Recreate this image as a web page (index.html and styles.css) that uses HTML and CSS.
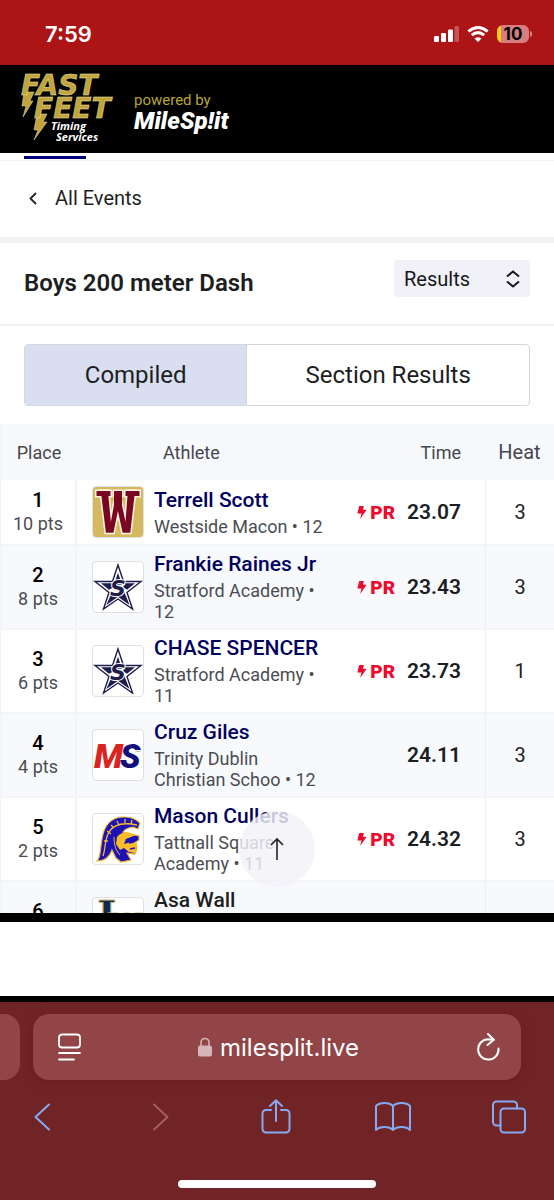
FILE: index.html
```
<!DOCTYPE html>
<html lang="en">
<head>
    <meta charset="UTF-8">
    <meta name="viewport" content="width=device-width, initial-scale=1.0">
    <title>Boys 200 meter Dash - MileSplit Live</title>
    <link rel="stylesheet" href="styles.css">
</head>
<body>
    <div class="status-bar">
        <span class="clock">7:59</span>
        <div class="status-icons">
            <svg width="25" height="16" viewBox="0 0 25 16" fill="#fff">
                <rect x="0" y="10" width="5" height="6" rx="1.3"/>
                <rect x="7" y="7" width="5" height="9" rx="1.3"/>
                <rect x="14" y="3.500" width="5" height="12.500" rx="1.3"/>
                <rect x="20.500" y="0" width="4.500" height="16" rx="1.3" opacity=".28"/>
            </svg>
            <svg width="22" height="16" viewBox="0 0 22 16" fill="none" stroke="#fff" stroke-width="3">
                <path d="M1.300 5.400Q11-2.600 20.700 5.400"/>
                <path d="M4.800 9.200Q11 4 17.200 9.200"/>
                <path d="M11 16 7.500 12.600Q11 9.800 14.500 12.600Z" fill="#fff" stroke="none"/>
            </svg>
            <div class="battery"><span>10</span></div>
        </div>
    </div>

    <header class="site-header">
        <svg class="timing-logo" width="96" height="72" viewBox="0 0 96 72">
            <g fill="#c1a43b" stroke="#efe3b0" stroke-width=".5">
                <path d="M4 19 14 19 10 28 13 28 3 44 6 33 2 33Z"/>
                <path d="M17 41 27 41 23 49 27 49 14 67 18 57 14 57Z"/>
                <text class="timing-name" x="1" y="22">FAST</text>
                <text class="timing-name" x="14" y="45">FEET</text>
            </g>
            <text class="timing-sub" x="31" y="57">Timing</text>
            <text class="timing-sub" x="36" y="68">Services</text>
        </svg>
        <div class="powered">
            <span>powered by</span>
            <strong>MileSp!it</strong>
        </div>
    </header>

    <main class="page">
        <div class="nav-strip"><i></i></div>

        <a class="back-link" href="#events">
            <svg width="18" height="18" viewBox="0 0 18 18" fill="none" stroke="#222" stroke-width="1.8"><path d="M12 4 6.500 9.500 12 15"/></svg>
            All Events
        </a>

        <div class="event-head">
            <h1>Boys 200 meter Dash</h1>
            <div class="select-wrap">
                <select aria-label="View">
                    <option>Results</option>
                    <option>Entries</option>
                </select>
                <svg width="16" height="18" viewBox="0 0 16 18" fill="none" stroke="#16181d" stroke-width="2"><path d="M2 6.500 8 1.500 14 6.500M2 11.500 8 16.500 14 11.500"/></svg>
            </div>
        </div>

        <div class="tabs">
            <button type="button" class="active">Compiled</button>
            <button type="button">Section Results</button>
        </div>

        <table class="results">
            <thead>
                <tr>
                    <th class="place">Place</th>
                    <th class="athlete">Athlete</th>
                    <th class="time">Time</th>
                    <th class="heat">Heat</th>
                </tr>
            </thead>
            <tbody>
                <tr>
                    <td class="place"><b>1</b><span>10 pts</span></td>
                    <td class="athlete">
                        <div class="runner">
                            <svg class="logo" viewBox="0 0 50 50">
                                <rect width="50" height="50" fill="#d5b95f"/>
                                <g fill="#7a0722" stroke="#fff5e4" stroke-width="3">
                                    <rect x="3.500" y="4" width="14" height="5"/>
                                    <rect x="21" y="4" width="8" height="5"/>
                                    <rect x="32.500" y="4" width="14" height="5"/>
                                    <text class="logo-w" x="25" y="46" text-anchor="middle">W</text>
                                </g>
                                <g fill="#7a0722">
                                    <rect x="3.500" y="4" width="14" height="5"/>
                                    <rect x="21" y="4" width="8" height="14"/>
                                    <rect x="32.500" y="4" width="14" height="5"/>
                                </g>
                            </svg>
                            <div class="info"><a href="#terrell-scott">Terrell Scott</a><p>Westside Macon • 12</p></div>
                        </div>
                    </td>
                    <td class="time"><div class="mark"><em><svg width="10" height="13" viewBox="0 0 10 14"><path d="M2 0H7L6 4H10L3 14 4.500 8H0Z" fill="#ee0a2e"/></svg>PR</em>23.07</div></td>
                    <td class="heat">3</td>
                </tr>
                <tr>
                    <td class="place"><b>2</b><span>8 pts</span></td>
                    <td class="athlete">
                        <div class="runner">
                            <svg class="logo" viewBox="0 0 50 50">
                                <g stroke="#1d1c4b" stroke-width="1.4">
                                    <path d="M25 3 30.500 19.500H48L34 30.500 39.500 47 25 37 10.500 47 16 30.500 2 19.500H19.500Z" fill="#fff"/>
                                    <path d="M25 13 28 22H22ZM10 22H18L20 25 16 27ZM40 22H32L31 25 34 27ZM19 32 15 41 25 34 35 41 31 31 25 32Z" fill="#1d1c4b"/>
                                </g>
                                <text class="logo-s" x="25" y="34" text-anchor="middle">S</text>
                            </svg>
                            <div class="info"><a href="#frankie-raines">Frankie Raines Jr</a><p>Stratford Academy • 12</p></div>
                        </div>
                    </td>
                    <td class="time"><div class="mark"><em><svg width="10" height="13" viewBox="0 0 10 14"><path d="M2 0H7L6 4H10L3 14 4.500 8H0Z" fill="#ee0a2e"/></svg>PR</em>23.43</div></td>
                    <td class="heat">3</td>
                </tr>
                <tr>
                    <td class="place"><b>3</b><span>6 pts</span></td>
                    <td class="athlete">
                        <div class="runner">
                            <svg class="logo" viewBox="0 0 50 50">
                                <g stroke="#1d1c4b" stroke-width="1.4">
                                    <path d="M25 3 30.500 19.500H48L34 30.500 39.500 47 25 37 10.500 47 16 30.500 2 19.500H19.500Z" fill="#fff"/>
                                    <path d="M25 13 28 22H22ZM10 22H18L20 25 16 27ZM40 22H32L31 25 34 27ZM19 32 15 41 25 34 35 41 31 31 25 32Z" fill="#1d1c4b"/>
                                </g>
                                <text class="logo-s" x="25" y="34" text-anchor="middle">S</text>
                            </svg>
                            <div class="info"><a href="#chase-spencer">CHASE SPENCER</a><p>Stratford Academy • 11</p></div>
                        </div>
                    </td>
                    <td class="time"><div class="mark"><em><svg width="10" height="13" viewBox="0 0 10 14"><path d="M2 0H7L6 4H10L3 14 4.500 8H0Z" fill="#ee0a2e"/></svg>PR</em>23.73</div></td>
                    <td class="heat">1</td>
                </tr>
                <tr>
                    <td class="place"><b>4</b><span>4 pts</span></td>
                    <td class="athlete">
                        <div class="runner">
                            <svg class="logo" viewBox="0 0 50 50">
                                <text class="logo-ms" x="1" y="38" fill="#d8251f">M</text>
                                <text class="logo-ms" x="27" y="38" fill="#13107c">S</text>
                                <path d="M38 20.500H48M27 29.500H37" stroke="#fff" stroke-width="1.2"/>
                            </svg>
                            <div class="info"><a href="#cruz-giles">Cruz Giles</a><p>Trinity Dublin Christian Schoo • 12</p></div>
                        </div>
                    </td>
                    <td class="time"><div class="mark">24.11</div></td>
                    <td class="heat">3</td>
                </tr>
                <tr>
                    <td class="place"><b>5</b><span>2 pts</span></td>
                    <td class="athlete">
                        <div class="runner">
                            <svg class="logo" viewBox="0 0 50 50">
                                <path d="M4 47C8 43 7 35 9 25 11 12 18 3 31 3 38 3 43 5 47 9L45 15 40 13C34 14 32 15 30 18L46 22V26L43 28 44 34 42 40 34 39 38 46 28 48 23 44 19 36C17 42 12 47 4 47Z" fill="#1c12b5" stroke="#f0b52e" stroke-width="1.2"/>
                                <path d="M24 23C27 19 33 17 38 19L43 21 33 25 31 30 38 28 43 28 44 33 42 39 36 38 31 34 27 36 23 30Z" fill="#f7bd2b"/>
                                <path d="M10 42C13 34 11 27 16 18 21 10 30 8 44 11M14 17 18 20M18 11 21 14M24 7 26 11M32 5V9M39 6 38 10M11 27H15" fill="none" stroke="#f7bd2b" stroke-width="1.3"/>
                                <path d="M33 26 45 24M36 29 41 28M37 35 42 34M22 38 30 43 34 42" fill="none" stroke="#1c12b5" stroke-width="1.6"/>
                                <path d="M21 23C21 31 23 37 27 41" fill="none" stroke="#f7bd2b"/>
                            </svg>
                            <div class="info"><a href="#mason-cullers">Mason Cullers</a><p>Tattnall Square Academy • 11</p></div>
                        </div>
                    </td>
                    <td class="time"><div class="mark"><em><svg width="10" height="13" viewBox="0 0 10 14"><path d="M2 0H7L6 4H10L3 14 4.500 8H0Z" fill="#ee0a2e"/></svg>PR</em>24.32</div></td>
                    <td class="heat">3</td>
                </tr>
                <tr>
                    <td class="place"><b>6</b><span>1 pt</span></td>
                    <td class="athlete">
                        <div class="runner">
                            <svg class="logo" viewBox="0 0 50 50">
                                <g fill="#14294a" stroke="#c9bd83" stroke-width="1">
                                    <text class="logo-l" x="4" y="33">L</text>
                                    <text class="logo-lw" x="15" y="37">W</text>
                                </g>
                            </svg>
                            <div class="info"><span>Asa Wall</span><p>First Presbyterian Day • 11</p></div>
                        </div>
                    </td>
                    <td class="time"><div class="mark"></div></td>
                    <td class="heat"></td>
                </tr>
            </tbody>
        </table>

        <button type="button" class="to-top" aria-label="Back to top">
            <svg width="16" height="24" viewBox="0 0 16 24" fill="none" stroke="#222329" stroke-width="1.6"><path d="M8 23V2M2 8 8 2 14 8"/></svg>
        </button>
    </main>

    <div class="ad-slot"></div>

    <footer class="browser-bar">
        <div class="address-row">
            <div class="prev-tab"></div>
            <div class="address">
                <button type="button" aria-label="Page menu">
                    <svg width="26" height="28" viewBox="0 0 26 28" fill="none" stroke="#fff" stroke-width="1.8" stroke-linecap="round"><rect x="3" y="1.500" width="21" height="13" rx="3"/><path d="M3 20H24M3 26.500H18"/></svg>
                </button>
                <div class="url">
                    <svg width="14" height="20" viewBox="0 0 14 20"><path d="M3 10V5.500a4 4 0 0 1 8 0V10" fill="none" stroke="#d3b5ba" stroke-width="1.6"/><rect y="8.500" width="14" height="11" rx="2" fill="#d3b5ba"/></svg>
                    <span>milesplit.live</span>
                </div>
                <button type="button" aria-label="Reload">
                    <svg width="26" height="28" viewBox="0 0 26 28" fill="none" stroke="#fff" stroke-width="2" stroke-linecap="round" stroke-linejoin="round"><path d="M23.500 15.500A10.200 10.200 0 1 1 13.300 6.200L18.500 6.800"/><path d="M13 1 18.800 6.800 12.500 12"/></svg>
                </button>
            </div>
        </div>
        <nav class="toolbar">
            <button type="button" aria-label="Back"><svg viewBox="0 0 36 36"><path d="M24 5.500 10.500 18 24 30.500"/></svg></button>
            <button type="button" aria-label="Forward" disabled><svg viewBox="0 0 36 36"><path d="M12 5.500 25.500 18 12 30.500"/></svg></button>
            <button type="button" aria-label="Share"><svg viewBox="0 0 36 36"><path d="M13 11H8a3.500 3.500 0 0 0-3.500 3.500V30A3.500 3.500 0 0 0 8 33.500H28A3.500 3.500 0 0 0 31.500 30V14.500A3.500 3.500 0 0 0 28 11H23M18 22V1.500M12 7 18 1.200 24 7"/></svg></button>
            <button type="button" aria-label="Bookmarks"><svg viewBox="0 0 36 36"><path d="M18 7C14 3 5 3 1 7V31C5 27 14 27 18 31 22 27 31 27 35 31V7C31 3 22 3 18 7ZM18 7V31"/></svg></button>
            <button type="button" aria-label="Tabs"><svg viewBox="0 0 36 36"><path d="M9.500 26.500H5.500a3.500 3.500 0 0 1-3.500-3.500V6A3.500 3.500 0 0 1 5.500 2.500H22.500A3.500 3.500 0 0 1 26 6V9.500"/><rect x="9.500" y="9.500" width="24.500" height="24" rx="3.500"/></svg></button>
        </nav>
        <div class="home-indicator"></div>
    </footer>
</body>
</html>
```
FILE: styles.css
```
* {
    box-sizing: border-box;
}

body {
    display: flex;
    flex-direction: column;
    height: 100vh;
    margin: 0;
    font-family: Roboto, 'Liberation Sans', sans-serif;
    font-size: 20px;
    color: #1d1e22;
    background-color: #fff;
}

button {
    padding: 0;
    border: none;
    background: none;
    font: inherit;
    color: inherit;
    cursor: pointer;
}

a {
    color: inherit;
    text-decoration: none;
}

svg {
    display: block;
    flex-shrink: 0;
}

/* phone status bar */
.status-bar {
    display: flex;
    justify-content: space-between;
    align-items: center;
    height: 65px;
    flex-shrink: 0;
    padding: 2px 25px 0 45px;
    background-color: #ad1416;
    color: #fff;
    font-family: Inter, sans-serif;
}

.clock {
    font-size: 22px;
    font-weight: 600;
}

.status-icons {
    display: flex;
    align-items: center;
    gap: 8px;
}

.battery {
    position: relative;
    width: 32px;
    height: 18px;
    border-radius: 6px;
    background: linear-gradient(90deg, #fc1 4px, #d77e81 4px);
    color: #000;
    font-size: 17px;
    font-weight: 700;
    line-height: 18px;
    text-align: center;
}

.battery::after {
    content: '';
    position: absolute;
    left: 33px;
    top: 6px;
    width: 2px;
    height: 6px;
    border-radius: 0 2px 2px 0;
    background-color: #d77e81;
}

/* site header */
.site-header {
    display: flex;
    align-items: center;
    gap: 18px;
    height: 88px;
    flex-shrink: 0;
    padding-left: 20px;
    background-color: #000;
}

.timing-name {
    font-family: 'DejaVu Sans', sans-serif;
    font-size: 28px;
    font-weight: 700;
    font-style: italic;
}

.timing-sub {
    fill: #fff;
    font-family: 'Open Sans', sans-serif;
    font-size: 11px;
    font-weight: 700;
    font-style: italic;
}

.powered {
    padding-top: 4px;
    color: #b9a436;
    font-size: 15px;
}

.powered span,
.powered strong {
    display: block;
    line-height: 20px;
}

.powered strong {
    color: #fff;
    font-size: 24px;
    font-weight: 900;
    font-style: italic;
    line-height: 22px;
}

/* scrolling page */
.page {
    position: relative;
    flex: 1;
    min-height: 0;
    overflow: hidden;
}

.nav-strip {
    height: 8px;
    padding: 3px 24px 0;
    border-bottom: 1px solid #f3f3f4;
}

.nav-strip i {
    display: block;
    width: 62px;
    height: 3px;
    background-color: #00007c;
}

.back-link {
    display: flex;
    align-items: center;
    gap: 13px;
    height: 82px;
    padding: 0 24px 2px;
    border-bottom: 6px solid #f3f3f4;
}

.event-head {
    display: flex;
    justify-content: space-between;
    align-items: flex-start;
    height: 83px;
    padding: 17px 24px 0;
    border-bottom: 2px solid #f3f3f4;
}

.event-head h1 {
    margin: 8px 0 0;
    font-size: 24px;
    font-weight: 600;
    line-height: 30px;
}

.select-wrap {
    position: relative;
}

.select-wrap select {
    appearance: none;
    width: 136px;
    height: 37px;
    padding: 0 10px;
    border: none;
    border-radius: 4px;
    background-color: #f1f1f7;
    color: #16181d;
    font: inherit;
}

.select-wrap svg {
    position: absolute;
    right: 9px;
    top: 10px;
    pointer-events: none;
}

.tabs {
    display: flex;
    height: 62px;
    margin: 18px 24px;
    border: 1px solid #d5d7dd;
    border-radius: 4px;
    font-size: 24px;
}

.tabs button {
    flex: 56;
}

.tabs .active {
    flex: 44;
    border-right: 1px solid #d5d7dd;
    background-color: #d9dff0;
}

/* results table */
.results {
    width: 100%;
    table-layout: fixed;
    border-collapse: separate;
    border-spacing: 0;
}

.results th {
    height: 56px;
    padding: 0;
    background-color: #f8f9fd;
    color: #45474e;
    font-size: 18px;
    font-weight: 400;
}

.results td {
    padding: 6px 0;
    border-bottom: 2px solid #f3f4f7;
}

.results tbody tr:nth-child(even) td {
    background-color: #f8f9fd;
}

.results .place {
    width: 77px;
    border-left: 1px solid #f3f4f7;
    text-align: center;
}

td.place {
    border-right: 2px solid #f3f4f7;
}

.place b,
.place span {
    display: block;
    line-height: 24px;
}

.place b {
    font-weight: 500;
    color: #000;
}

.place span {
    color: #4b4d54;
    font-size: 18px;
}

.results .athlete {
    padding-left: 15px;
    padding-right: 14px;
}

.results th.athlete {
    padding-left: 86px;
    text-align: left;
}

.runner {
    display: flex;
    align-items: center;
    gap: 10px;
}

.logo {
    width: 52px;
    height: 52px;
    border: 1px solid #dfe0e4;
    border-radius: 4px;
    background-color: #fff;
}

.logo-w {
    font-family: 'DejaVu Sans Mono', monospace;
    font-size: 57px;
    font-weight: 700;
    paint-order: stroke;
}

.logo-s {
    fill: #1d1c4b;
    stroke: #fff;
    stroke-width: 2px;
    paint-order: stroke;
    font-family: 'DejaVu Sans', sans-serif;
    font-size: 22px;
    font-weight: 700;
    font-style: italic;
}

.logo-ms {
    font-family: Roboto, sans-serif;
    font-size: 34px;
    font-weight: 900;
    font-style: italic;
}

.logo-l,
.logo-lw {
    font-family: 'DejaVu Serif', serif;
    font-size: 42px;
    font-weight: 700;
}

.logo-lw {
    font-size: 30px;
}

.info a,
.info span {
    display: block;
    font-size: 21px;
    font-weight: 500;
    line-height: 24px;
}

.info a {
    color: #00005f;
}

.info p {
    margin: 4px 0 0;
    color: #4b4d54;
    font-size: 18px;
    line-height: 21px;
}

.results .time {
    width: 145px;
    padding-right: 24px;
    text-align: right;
}

.mark {
    display: flex;
    justify-content: flex-end;
    align-items: center;
    gap: 12px;
    font-size: 21px;
    font-weight: 600;
}

.mark em {
    display: flex;
    align-items: center;
    gap: 3px;
    color: #ee0a2e;
    font-size: 19px;
    font-style: normal;
    font-weight: 900;
}

.results .heat {
    width: 69px;
    text-align: center;
}

.results th.heat {
    font-size: 20px;
}

.results td.heat {
    border-left: 1px solid #eeeff3;
}

.to-top {
    position: absolute;
    left: calc(50% - 38px);
    bottom: 26px;
    display: flex;
    justify-content: center;
    align-items: center;
    width: 76px;
    height: 76px;
    border-radius: 50%;
    background-color: rgba(241, 241, 248, .82);
}

.ad-slot {
    height: 89px;
    flex-shrink: 0;
    border-top: 9px solid #000;
    border-bottom: 6px solid #000;
}

/* browser controls */
.browser-bar {
    height: 198px;
    flex-shrink: 0;
    padding-top: 12px;
    background-color: #702425;
}

.address-row {
    display: flex;
    gap: 13px;
    padding-right: 33px;
}

.prev-tab {
    width: 20px;
    border-radius: 0 16px 16px 0;
    background-color: #914546;
}

.address {
    display: flex;
    flex: 1;
    justify-content: space-between;
    align-items: center;
    height: 66px;
    padding: 0 20px 0 23px;
    border-radius: 16px;
    background-color: #914546;
    box-shadow: 0 2px 12px rgba(80, 10, 10, .2);
    color: #fff;
}

.url {
    display: flex;
    align-items: center;
    gap: 8px;
    font-family: Inter, sans-serif;
    font-size: 24px;
}

.toolbar {
    display: flex;
    justify-content: space-between;
    margin-top: 19px;
    padding: 0 27px 0 25px;
}

.toolbar svg {
    width: 36px;
    height: 36px;
    fill: none;
    stroke: #85a9f5;
    stroke-width: 2;
    stroke-linecap: round;
    stroke-linejoin: round;
}

.toolbar button:disabled svg {
    stroke: #a05f62;
}

.home-indicator {
    width: 198px;
    height: 8px;
    margin: 45px auto 0;
    border-radius: 4px;
    background-color: #fff;
}
```
